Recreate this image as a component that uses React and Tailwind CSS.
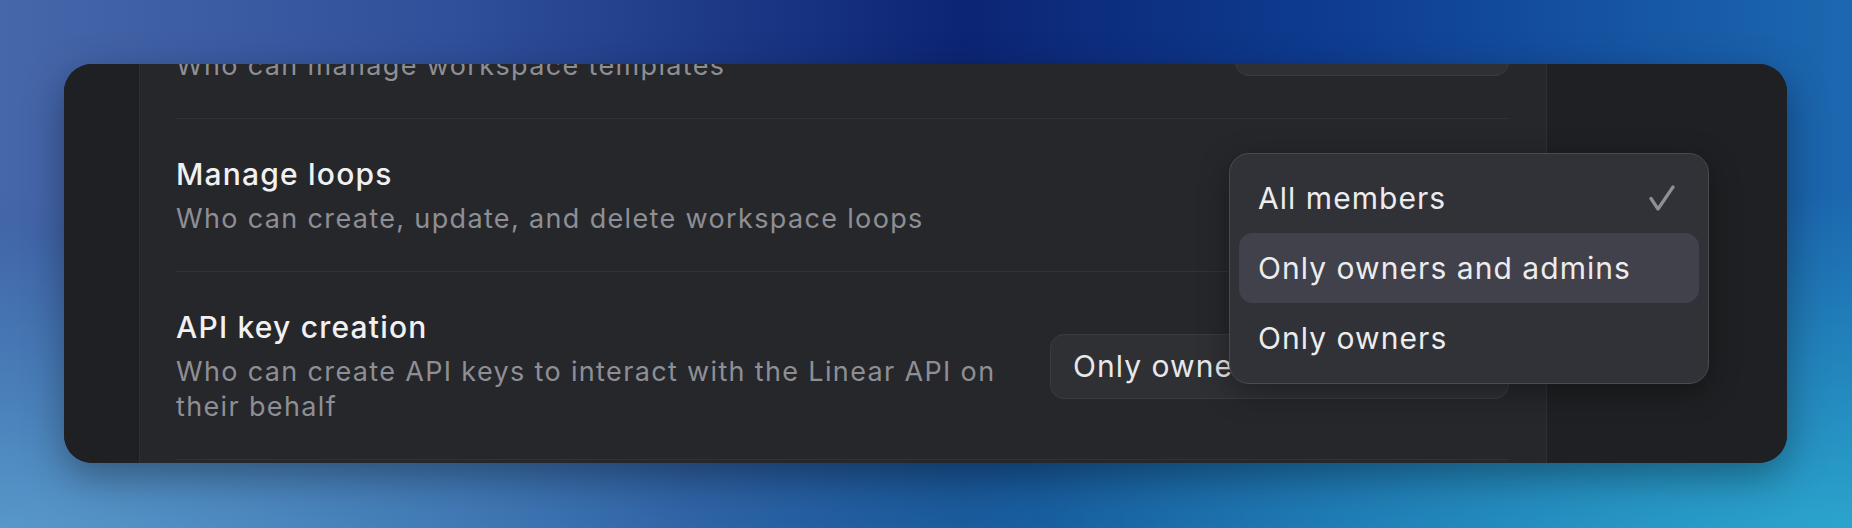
import React from 'react'

const font = { fontFamily: 'Inter, "Noto Sans", sans-serif' }

const SettingRow = ({ title, description, value, selectWidth, className = '' }) => (
  <div className={`flex items-center justify-between gap-[48px] border-b border-[#313236] pt-[37px] pb-[35px] ${className}`}>
    <div className="flex-1 min-w-0">
      <div className="text-[30px] leading-[36px] font-medium tracking-[0.04em] text-[#f1f1f3]">{title}</div>
      <div className="mt-[9px] max-w-[830px] text-[27px] leading-[35px] tracking-[0.05em] text-[#8e8f95]">{description}</div>
    </div>
    <div
      className={`flex h-[65px] shrink-0 items-center rounded-[14px] border border-[#3a3b40] bg-[#2f3034] px-[22px] text-[30px] tracking-[0.035em] text-[#e8e8ea] ${selectWidth}`}
    >
      {value}
    </div>
  </div>
)

const CheckIcon = () => (
  <svg width="26" height="26" viewBox="0 0 26 26" fill="none">
    <path d="M2 13.5 L9 24 L24 2" stroke="#8f9095" strokeWidth="3.2" strokeLinecap="round" strokeLinejoin="round" />
  </svg>
)

const Dropdown = () => {
  const options = ['All members', 'Only owners and admins', 'Only owners']
  return (
    <div className="absolute left-[1165px] top-[89px] w-[480px] h-[231px] rounded-[20px] border border-[#4a4b51] bg-[#313237] p-[9px] shadow-[0_8px_30px_rgba(0,0,0,0.35)]">
      {options.map((opt, i) => (
        <div
          key={opt}
          className={`flex h-[70px] items-center justify-between rounded-[14px] pl-[19px] pr-[24px] text-[30px] tracking-[0.035em] text-[#ececee] ${i === 1 ? 'bg-[#40414a]' : ''}`}
        >
          <span>{opt}</span>
          {i === 0 && <CheckIcon />}
        </div>
      ))}
    </div>
  )
}

export default function App() {
  return (
    <div
      style={font}
      className="h-[528px] w-[1852px] overflow-hidden pt-[64px] pl-[64px] pr-[65px] bg-[radial-gradient(ellipse_at_100%_100%,#2ba4cc_0%,transparent_45%),radial-gradient(ellipse_at_0%_100%,#5897c9_0%,transparent_40%),linear-gradient(180deg,transparent_35%,rgba(20,90,160,0.45)_100%),linear-gradient(90deg,#4667aa_0%,#2f4f9a_25%,#0c2574_52%,#0e3c90_72%,#1c68b0_100%)]"
    >
      <div className="relative flex h-[399px] overflow-hidden rounded-[28px] bg-[#1f2023] shadow-[0_14px_40px_rgba(0,0,0,0.35)]">
        {/* sidebar */}
        <div className="w-[76px] shrink-0 border-r border-[#2f3034] bg-[#1f2023]" />

        {/* settings list */}
        <div className="w-[1407px] shrink-0 border-r border-[#2f3034] bg-[#26272b] pl-[36px] pr-[37px]">
          <SettingRow
            className="mt-[-98px]"
            title="Manage templates"
            description="Who can manage workspace templates"
            value="All members"
            selectWidth="w-[274px]"
          />
          <SettingRow
            title="Manage loops"
            description="Who can create, update, and delete workspace loops"
            value="All members"
            selectWidth="w-[274px]"
          />
          <SettingRow
            title="API key creation"
            description="Who can create API keys to interact with the Linear API on their behalf"
            value="Only owners"
            selectWidth="w-[459px]"
          />
        </div>

        {/* right gutter */}
        <div className="flex-1 bg-[#1f2023]" />

        <Dropdown />
      </div>
    </div>
  )
}
